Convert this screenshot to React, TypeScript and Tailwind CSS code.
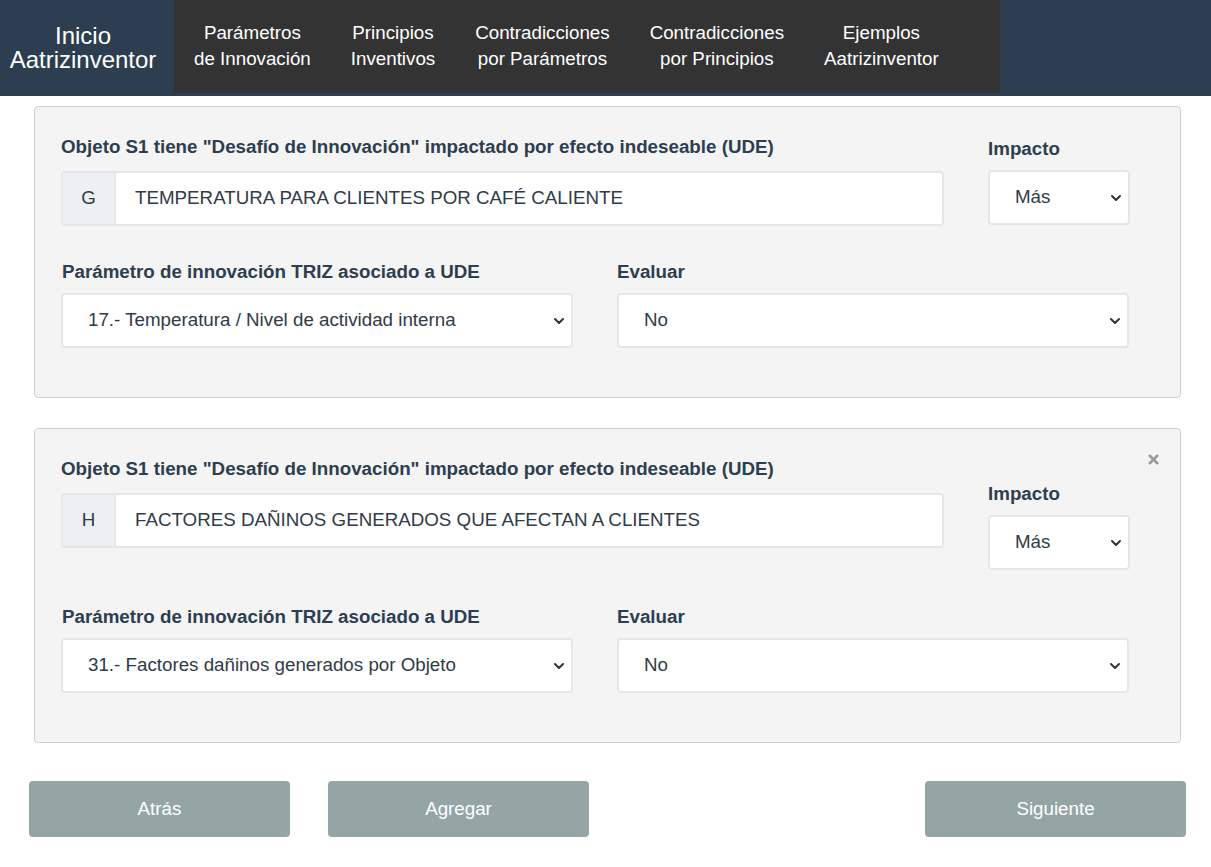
import { ChevronDown, X } from "lucide-react";

const navItems = [
  ["Parámetros", "de Innovación"],
  ["Principios", "Inventivos"],
  ["Contradicciones", "por Parámetros"],
  ["Contradicciones", "por Principios"],
  ["Ejemplos", "Aatrizinventor"],
];

const Select = ({ value, className }: { value: string; className: string }) => (
  <div className={`relative ${className}`}>
    <select
      defaultValue={value}
      className="w-full h-full appearance-none bg-white border-2 border-[#e3e7eb] rounded-[4px] pl-[25px] pr-8 text-[18.75px] text-[#2f3b47] outline-none"
    >
      <option>{value}</option>
    </select>
    <ChevronDown
      size={16}
      strokeWidth={3}
      className="absolute right-[6px] top-1/2 -translate-y-1/2 text-[#333] pointer-events-none"
    />
  </div>
);

const Card = ({
  letter,
  text,
  param,
  closable,
}: {
  letter: string;
  text: string;
  param: string;
  closable?: boolean;
}) => (
  <div className="relative bg-[#f4f4f4] border border-[#cfcfcf] rounded-[4px] pl-[26px] pt-[27px] pb-[49px]">
    {closable && (
      <X
        size={15}
        strokeWidth={4}
        className="absolute right-[19px] top-[23px] text-[#999]"
      />
    )}
    <div className="flex gap-[44px]">
      <div className="w-[883px]">
        <div className="text-[18.75px] font-bold text-[#2c3e50] leading-[24px] mb-[12px] pt-[1px]">
          Objeto S1 tiene "Desafío de Innovación" impactado por efecto indeseable (UDE)
        </div>
        <div className="flex h-[55px] border-2 border-[#e3e7eb] rounded-[4px] bg-white">
          <div className="w-[53px] bg-[#edf0f2] border-r-2 border-[#e3e7eb] flex items-center justify-center text-[18.75px] text-[#2f3b47] rounded-l-[3px]">
            {letter}
          </div>
          <div className="flex-1 flex items-center pl-[19px] text-[18.75px] text-[#2f3b47]">
            {text}
          </div>
        </div>
      </div>
      <div className={`w-[142px] ${closable ? "mt-[23px]" : ""}`}>
        <div className="text-[18.75px] font-bold text-[#2c3e50] leading-[24px] mb-[9px] pt-[3px]">
          Impacto
        </div>
        <Select value="Más" className="h-[55px]" />
      </div>
    </div>
    <div className={`flex gap-[44px] ${closable ? "mt-[35px]" : "mt-[34px]"}`}>
      <div className="w-[512px]">
        <div className="text-[18.75px] font-bold text-[#2c3e50] leading-[24px] mb-[9px] pl-[1px]">
          Parámetro de innovación TRIZ asociado a UDE
        </div>
        <Select value={param} className="h-[55px]" />
      </div>
      <div className="w-[512px]">
        <div className="text-[18.75px] font-bold text-[#2c3e50] leading-[24px] mb-[9px]">
          Evaluar
        </div>
        <Select value="No" className="h-[55px]" />
      </div>
    </div>
  </div>
);

const App = () => {
  return (
    <div className="min-h-screen bg-white font-['Liberation_Sans',Arial,sans-serif]">
      <div className="flex h-[96px] bg-[#2c3e50]">
        <div className="w-[174px] flex flex-col items-center justify-center text-white text-[24px] leading-[24px] pb-[1px] pr-[8px]">
          <span>Inicio</span>
          <span>Aatrizinventor</span>
        </div>
        <div className="flex h-[93px] w-[826px] bg-[#333333]">
          {navItems.map(([a, b], i) => (
            <div
              key={i}
              className="flex flex-col items-center justify-center px-[20px] pb-[2px] text-white text-[18.75px] leading-[26px]"
            >
              <span>{a}</span>
              <span>{b}</span>
            </div>
          ))}
        </div>
      </div>

      <div className="flex flex-col gap-[30px] pl-[34px] pr-[30px] pt-[10px]">
        <Card
          letter="G"
          text="TEMPERATURA PARA CLIENTES POR CAFÉ CALIENTE"
          param="17.- Temperatura / Nivel de actividad interna"
        />
        <Card
          letter="H"
          text="FACTORES DAÑINOS GENERADOS QUE AFECTAN A CLIENTES"
          param="31.- Factores dañinos generados por Objeto"
          closable
        />
      </div>

      <div className="flex pl-[29px] pr-[25px] mt-[38px]">
        <button className="w-[261px] h-[56px] bg-[#95a5a6] rounded-[4px] text-white text-[18.75px]">
          Atrás
        </button>
        <button className="w-[261px] h-[56px] bg-[#95a5a6] rounded-[4px] text-white text-[18.75px] ml-[38px]">
          Agregar
        </button>
        <button className="w-[261px] h-[56px] bg-[#95a5a6] rounded-[4px] text-white text-[18.75px] ml-auto">
          Siguiente
        </button>
      </div>
    </div>
  );
};

export default App;
